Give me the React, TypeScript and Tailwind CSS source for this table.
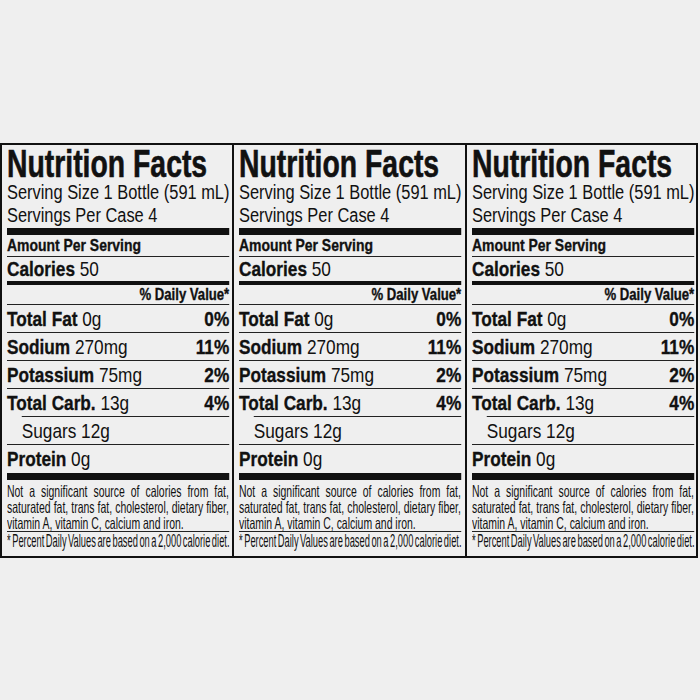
const rows = [
  { name: "Total Fat", amt: "0g", dv: "0%" },
  { name: "Sodium", amt: "270mg", dv: "11%" },
  { name: "Potassium", amt: "75mg", dv: "2%" },
  { name: "Total Carb.", amt: "13g", dv: "4%", indentNext: true },
];

const heavy = "font-bold [-webkit-text-stroke:0.35px_#111]";

function Rule({ className = "" }: { className?: string }) {
  return <div className={"h-px bg-[#222] " + className} />;
}

// content is laid out ~22% wider, then squeezed to look like a condensed face
function Panel({ className = "" }: { className?: string }) {
  return (
    <div className={"shrink-0 pl-[5px] " + className}>
      <div className="flex w-[271px] origin-left scale-x-[0.82] flex-col">
        <div className="h-[36px] pt-[2px] text-[39px] leading-[34px] font-bold whitespace-nowrap">
          <span className="inline-block origin-left scale-x-[0.887] [-webkit-text-stroke:0.6px_#111]">Nutrition Facts</span>
        </div>
        <div className="text-[20px] leading-[23px] whitespace-nowrap">
          <div>Serving Size 1 Bottle (591 mL)</div>
          <div>Servings Per Case 4</div>
        </div>
        <div className="mt-[1px] h-[7px] bg-[#111]" />
        <div className={"h-[21px] text-[17px] leading-[21px] " + heavy}>Amount Per Serving</div>
        <Rule />
        <div className="h-[24px] text-[21px] leading-[24px]">
          <span className={heavy}>Calories</span> 50
        </div>
        <div className="h-[4px] bg-[#111]" />
        <div className={"h-[19px] text-[16px] leading-[19px] text-right " + heavy}>% Daily Value*</div>
        <Rule />
        {rows.map((r) => (
          <div key={r.name}>
            <div className="flex h-[27px] justify-between text-[21px] leading-[27px]">
              <span>
                <span className={heavy}>{r.name}</span> {r.amt}
              </span>
              <span className={heavy}>{r.dv}</span>
            </div>
            <Rule className={r.indentNext ? "ml-[18px]" : ""} />
          </div>
        ))}
        <div className="h-[27px] pl-[18px] text-[21px] leading-[27px]">Sugars 12g</div>
        <Rule />
        <div className="h-[27px] text-[21px] leading-[27px]">
          <span className={heavy}>Protein</span> 0g
        </div>
        <div className="mt-[1px] h-[7px] bg-[#111]" />
        <div className="w-[350px] origin-left scale-x-[0.773] pt-[3px] text-[16.5px] leading-[16px]">
          <div className="text-justify [text-align-last:justify] whitespace-nowrap">Not a significant source of calories from fat,</div>
          <div className="text-justify [text-align-last:justify] whitespace-nowrap">saturated fat, trans fat, cholesterol, dietary fiber,</div>
          <div className="whitespace-nowrap">vitamin A, vitamin C, calcium and iron.</div>
        </div>
        <Rule />
        <div className="h-[19px] text-[17.5px] leading-[19px] whitespace-nowrap">
          <span className="inline-block origin-left scale-x-[0.65] [word-spacing:-2px]">* Percent Daily Values are based on a 2,000 calorie diet.</span>
        </div>
      </div>
    </div>
  );
}

export default function App() {
  return (
    <div className="h-[700px] w-[700px] bg-[#efefef] pt-[143px] text-[#111] font-['Liberation_Sans',Arial,sans-serif]">
      <div className="flex h-[415px] w-[698px] overflow-hidden border-2 border-[#111]">
        <Panel className="w-[230px]" />
        <Panel className="w-[233px] border-l-2 border-[#111]" />
        <Panel className="w-[231px] border-l-2 border-[#111]" />
      </div>
    </div>
  );
}
